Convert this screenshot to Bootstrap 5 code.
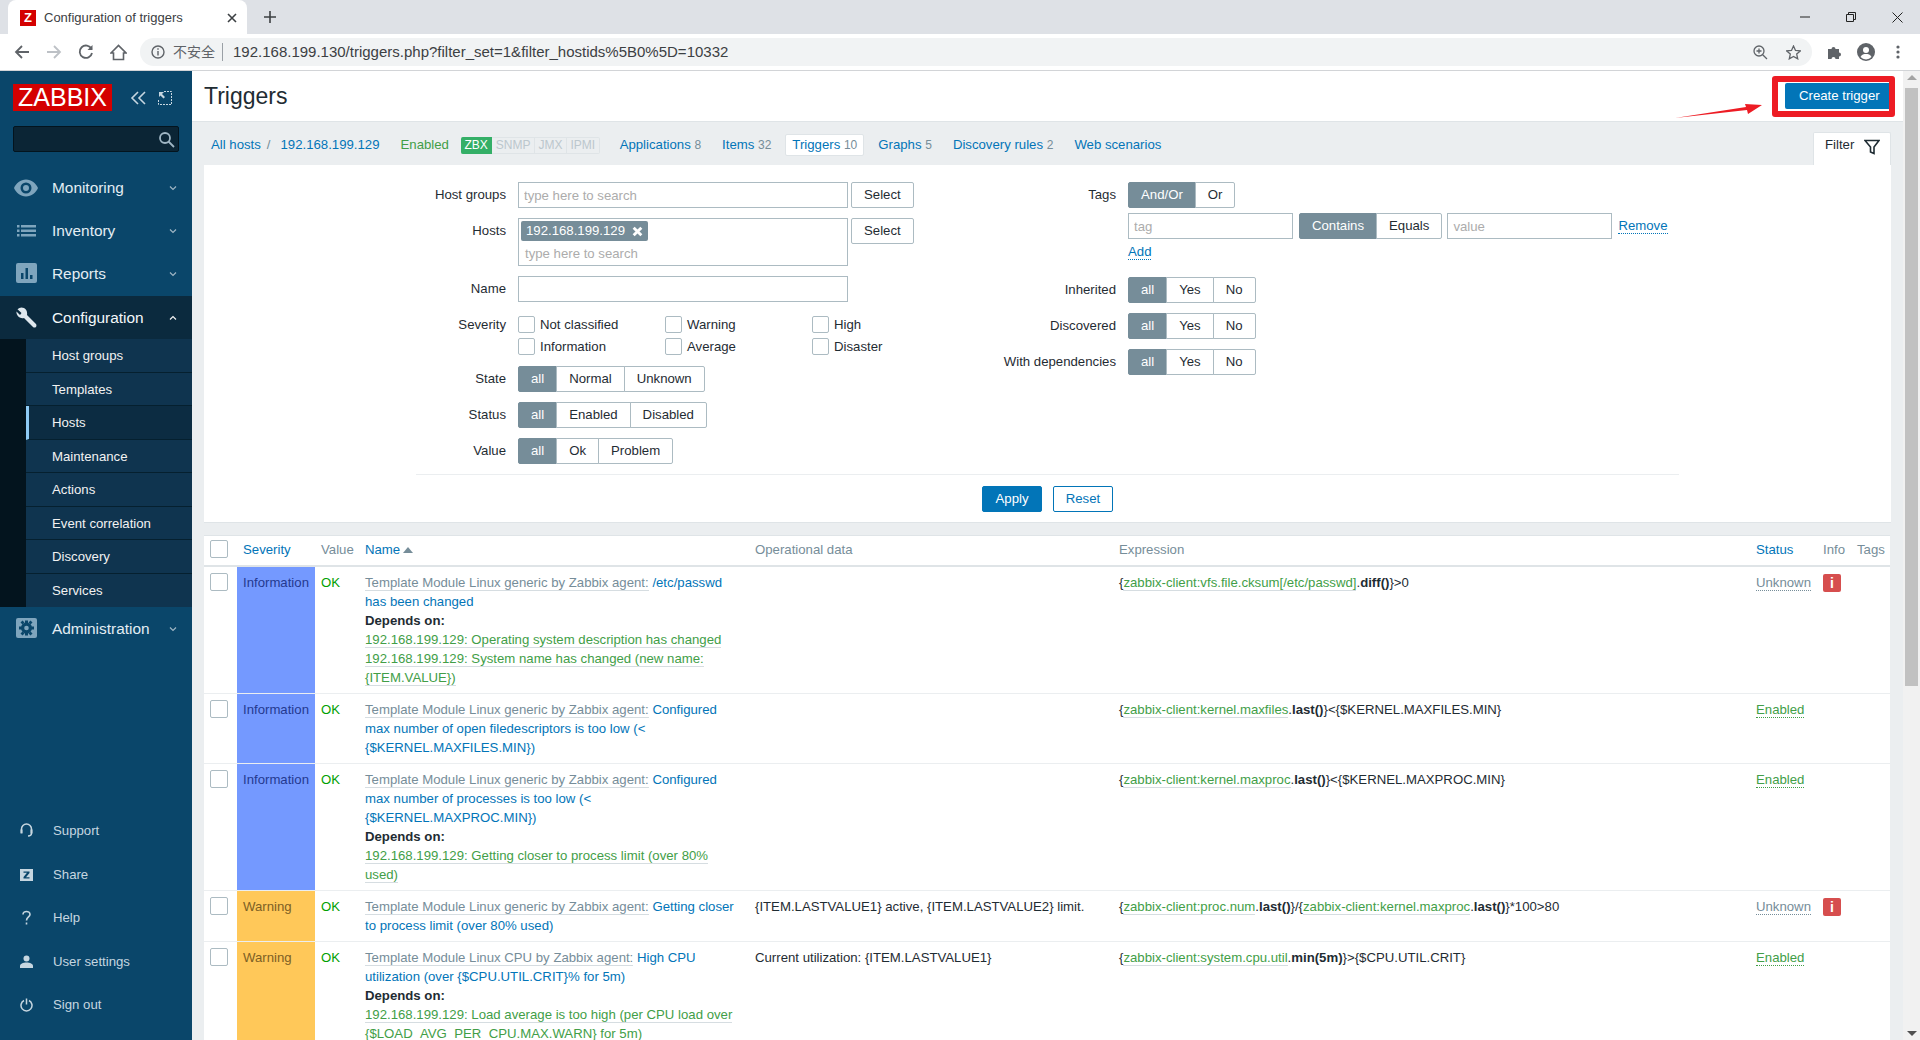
<!DOCTYPE html>
<html lang="en">
<head>
    <meta charset="UTF-8">
    <title>Configuration of triggers</title>
    <link href="https://cdn.jsdelivr.net/npm/bootstrap@5.3.3/dist/css/bootstrap.min.css" rel="stylesheet">
    <style>
        html, body { height: 100%; }
        body { font-family: "Liberation Sans", Arial, sans-serif; font-size: 13.2px; color: #1f2c33; overflow: hidden; background: #ebeef0; }
        a { text-decoration: none; color: #0275b8; }

        /* browser frame */
        .tab-strip { height: 34px; background: #dee1e6; flex: none; }
        .br-tab { width: 239px; margin-left: 8px; height: 34px; background: #fff; border-radius: 8px 8px 0 0; padding: 1px 10px 0 12px; color: #3c4043; font-size: 13px; }
        .br-fav { width: 16px; height: 16px; background: #d40000; color: #fff; font-weight: 700; font-size: 13px; line-height: 16px; text-align: center; }
        .br-plus { margin-left: 17px; }
        .win-btns { margin-left: auto; gap: 36px; padding-right: 17px; }
        .tool-bar { height: 37px; background: #fff; border-bottom: 1px solid #d2d4d7; padding: 0 0 0 14px; flex: none; }
        .omni { height: 28px; width: 1672px; margin-left: 13px; background: #f1f3f4; border-radius: 14px; padding: 0 11px; }
        .omni-warn { font-family: "Liberation Sans", "Noto Sans CJK SC", sans-serif; font-size: 14px; color: #5f6368; margin-left: 8px; padding-right: 7px; border-right: 1px solid #9aa0a6; line-height: 18px; }
        .omni-url { font-size: 15px; color: #3c4043; margin-left: 10px; }
        .star-ico { margin-left: 18px; }
        .puzzle-ico { margin-left: 15px; }
        .avatar-ico { margin-left: 14px; }
        .dots-ico { margin-left: 21px; }

        /* sidebar */
        .side-bar { width: 192px; flex: none; background: #0a466a; color: #f2f2f2; }
        .logo-box { background: #d40000; color: #fff; font-size: 25px; line-height: 27px; width: 99px; text-align: center; margin-right: 18px; }
        .logo-row { padding: 13px 0 0 13px; }
        .expand-ico { margin-left: 12px; }
        .side-search { margin: 15px 13px 15px; height: 26px; background: #0b2535; border: 1px solid #03141e; border-radius: 2px; padding-right: 3px; }
        .menu-main { height: 43px; padding: 0 15px 0 16px; font-size: 15.4px; color: #e3edf3; }
        .menu-main .menu-txt { margin-left: 15px; }
        .menu-lift { padding-bottom: 2px; }
        .menu-ico { width: 21px; height: 21px; flex: none; }
        .eye-ico { width: 24px; height: 24px; margin: 0 -1px 0 -2px; flex: none; }
        .menu-open { background: #0b2a3e; color: #f4f8fa; }
        .menu-caret { margin-left: auto; width: 8px; height: 8px; flex: none; }
        .sub-wrap { border-left: 26px solid #03141e; }
        .sub-item { height: 33.5px; padding-left: 26px; background: #0f344f; color: #f2f2f2; border-bottom: 1px solid #05202f; line-height: 33px; }
        .sub-item:last-child { border-bottom: 0; }
        .sub-active { background: #0c2c42; border-left: 3px solid #8ecbf5; padding-left: 23px; }
        .foot-menu { margin-top: auto; padding-bottom: 13px; }
        .foot-item { height: 43.5px; padding-left: 20px; color: #c6d6e0; }
        .foot-item .menu-txt { margin-left: 20px; }
        .foot-ico { width: 13px; height: 16px; flex: none; }

        /* content */
        .main-col { min-width: 0; }
        .page-head { height: 51px; background: #fff; border-bottom: 1px solid #dfe4e7; padding: 0 0 0 12px; flex: none; }
        .page-title { font-size: 23px; font-weight: 400; margin: 0; padding-top: 2px; color: #1f2c33; }
        .btn-create { height: 26px; width: 105px; margin-right: 13px; padding-left: 14px; background: #0275b8; color: #fff; border-radius: 2px 0 0 2px; font-size: 13.2px; line-height: 26px; }
        .host-nav { height: 43px; padding: 3px 12px 0 19px; flex: none; }
        .crumb-sep { margin: 0 10px 0 6px; color: #768d99; }
        .status-ok { color: #429e47; margin-left: 21px; margin-right: 12px; }
        .avail-box { height: 17px; font-size: 12px; line-height: 15px; margin-right: 6px; }
        .avail-item { border: 1px solid #dfe4e7; border-left: 0; color: #bcc7cd; padding: 0 3.5px; background: #ebeef0; }
        .avail-item:last-child { border-radius: 0 2px 2px 0; }
        .avail-zbx { background: #34af67; border-color: #34af67; color: #fff; border-radius: 2px 0 0 2px; }
        .nav-entry { padding: 3px 7px; margin-left: 7px; line-height: 16px; }
        .nav-entry span { color: #768d99; font-size: 12px; }
        .nav-now { background: #fff; border: 1px solid #dfe4e7; border-radius: 2px; padding: 2px 6px; }
        .filter-tab { margin-left: auto; align-self: flex-end; width: 78px; height: 33px; background: #fff; border: 1px solid #dfe4e7; border-bottom: 0; border-radius: 2px 2px 0 0; padding: 2px 10px 0 11px; }
        .filter-panel { margin: 0 12px; background: #fff; border-bottom: 1px solid #dfe4e7; padding: 17px 0 0 212px; height: 358px; flex: none; }
        .filter-left { width: 588px; }
        .filter-right { width: 675px; }
        .flt-row { display: grid; grid-template-columns: 90px 1fr; column-gap: 12px; margin-bottom: 10px; }
        .filter-right .flt-row { grid-template-columns: 112px 1fr; }
        .flt-lab { text-align: right; line-height: 26px; white-space: nowrap; justify-self: end; }
        .flt-input.form-control { width: 330px; height: 26px; padding: 0 5px; border: 1px solid #acbbc2; border-radius: 0; font-size: 13.2px; color: #1f2c33; }
        .flt-input.flt-small { width: 165px; }
        .flt-input::placeholder, .multi-hint { color: #acacac; }
        .multi-box { width: 330px; height: 48px; border: 1px solid #acbbc2; padding: 2px; }
        .host-chip { width: 127px; height: 20px; background: #768d99; color: #fff; border-radius: 2px; padding: 0 5px 0 5px; line-height: 20px; }
        .multi-hint { padding: 3px 4px 0; }
        .sel-btn.btn { height: 26px; margin-left: 3px; padding: 0 12px; background: #fff; border: 1px solid #acbbc2; border-radius: 2px; color: #1f2c33; font-size: 13.2px; line-height: 24px; }
        .seg-btn.btn { height: 26px; padding: 0 12px; background: #fff; border: 1px solid #acbbc2; color: #1f2c33; font-size: 13.2px; line-height: 24px; border-radius: 2px; }
        .seg-btn.seg-on { background: #768d99; border-color: #768d99; color: #fff; }
        .name-row { margin-bottom: 14px; }
        .tags-row { margin-bottom: 5px; }
        .tag-rule-row { margin-bottom: 15px; }
        .tag-seg { margin: 0 5px 0 6px; }
        .sev-grid { display: grid; grid-template-columns: repeat(3, 147px); row-gap: 5px; margin-bottom: 11px; }
        .sev-row { margin-bottom: 0; }
        .sev-item { line-height: 17px; }
        .trg-check.form-check-input { width: 17px; height: 17px; margin: 0; border: 1px solid #acbbc2; border-radius: 2px; flex: none; }
        .sev-item .trg-check.form-check-input { margin-right: 5px; }
        .dot-link { border-bottom: 1px dotted currentColor; line-height: 15px; }
        .add-link { margin-top: 5px; }
        .remove-link { margin-left: 6px; }
        .flt-div { width: 1263px; height: 1px; background: #ebeef0; }
        .flt-actions { width: 1263px; margin-top: 11px; padding-left: 566px; gap: 11px; }
        .btn-apply.btn, .btn-reset.btn { width: 60px; height: 26px; padding: 0; font-size: 13.2px; border-radius: 2px; line-height: 24px; }
        .btn-apply.btn { background: #0275b8; border: 1px solid #0275b8; color: #fff; }
        .btn-reset.btn { background: #fff; border: 1px solid #0275b8; color: #0275b8; }

        /* triggers table */
        .trg-wrap { margin: 12px 13px 0 12px; border-top: 1px solid #dfe4e7; background: #fff; flex: none; }
        .trg-table.table { table-layout: fixed; margin: 0; width: 1686px; font-size: 13.2px; --bs-table-bg: transparent; color: #1f2c33; }
        .trg-table thead th { font-weight: 400; color: #768d99; padding: 4px 6px 0; height: 30px; border-bottom: 2px solid #dfe4e7; line-height: 19px; vertical-align: top; }
        .trg-table td { padding: 6px; line-height: 19px; border-bottom: 1px solid #ebeef0; vertical-align: top; }
        .trg-table .chk-cell .trg-check.form-check-input { display: block; width: 18px; height: 18px; }
        .trg-table td.sev-info { background: #7499ff; color: #24398f; }
        .trg-table td.sev-warn { background: #ffc859; color: #7d6025; }
        .sort-up { display: inline-block; margin-left: 3px; border: 5px solid transparent; border-top: 0; border-bottom: 6px solid #768d99; vertical-align: 1px; }
        .trg-table td.val-ok { color: #00a000; }
        .tpl-link { color: #768d99; border-bottom: 1px solid #d6dde1; }
        .dep-link { color: #429e47; border-bottom: 1px solid #d6dde1; }
        .st-off { color: #768d99; }
        .st-on { color: #429e47; }
        .info-ico { display: block; width: 18px; height: 18px; background: #d64e4e; border-radius: 2px; color: #fff; font-weight: 700; font-size: 14px; line-height: 18px; text-align: center; margin-top: 1px; }

        /* scrollbar */
        .fake-scroll { width: 17px; flex: none; background: #f1f1f1; padding-top: 17px; }
        .scroll-thumb { height: 598px; width: 13px; margin: 0 auto; background: #c1c1c1; }
        .scroll-up, .scroll-down { position: absolute; left: 4px; border: 5px solid transparent; }
        .scroll-up { top: 4px; border-top: 0; border-bottom: 5px solid #a3a3a3; }
        .scroll-down { bottom: 4px; border-bottom: 0; border-top: 5px solid #505050; }

        /* annotation on top of the screenshot */
        .note-frame { position: absolute; left: 1772px; top: 76px; width: 123px; height: 41px; border: 6px solid #ed1c24; border-radius: 3px; pointer-events: none; }
        .note-arrow { position: absolute; left: 1672px; top: 100px; width: 92px; height: 20px; pointer-events: none; }
    </style>
</head>
<body class="d-flex flex-column position-relative">

<!-- browser tabs -->
<div class="tab-strip d-flex align-items-center">
    <div class="br-tab d-flex align-items-center">
        <span class="br-fav">Z</span>
        <span class="ms-2 flex-grow-1">Configuration of triggers</span>
        <svg width="10" height="10" viewBox="0 0 10 10"><path d="M1 1l8 8M9 1l-8 8" stroke="#3c4043" stroke-width="1.6"/></svg>
    </div>
    <svg class="br-plus" width="12" height="12" viewBox="0 0 12 12"><path d="M6 0v12M0 6h12" stroke="#3c4043" stroke-width="1.6"/></svg>
    <div class="win-btns d-flex align-items-center">
        <svg width="10" height="10" viewBox="0 0 10 10"><path d="M0 5h10" stroke="#222" stroke-width="1"/></svg>
        <svg width="10" height="10" viewBox="0 0 10 10" fill="none" stroke="#222"><path d="M.5 2.500h7v7h-7zM2.500 2.500v-2h7v7h-2"/></svg>
        <svg width="11" height="11" viewBox="0 0 11 11"><path d="M.5.5l10 10M10.500.5l-10 10" stroke="#222"/></svg>
    </div>
</div>

<!-- browser toolbar -->
<div class="tool-bar d-flex align-items-center">
    <svg width="16" height="16" viewBox="0 0 16 16" fill="none" stroke="#5f6368" stroke-width="1.8"><path d="M15 8H2M8 2L2 8l6 6"/></svg>
    <svg class="ms-3" width="16" height="16" viewBox="0 0 16 16" fill="none" stroke="#bdc1c6" stroke-width="1.8"><path d="M1 8h13M8 2l6 6-6 6"/></svg>
    <svg class="ms-3" width="16" height="16" viewBox="0 0 16 16" fill="none" stroke="#5f6368" stroke-width="1.8"><path d="M13.500 5A6.200 6.200 0 1 0 14 9"/><path d="M14.500 1v5h-5" fill="#5f6368" stroke="none"/></svg>
    <svg class="ms-3" width="17" height="17" viewBox="0 0 17 17" fill="none" stroke="#5f6368" stroke-width="1.6"><path d="M1 9l7.500-7.500L16 9h-2.500v6.500h-10V9z"/></svg>
    <div class="omni d-flex align-items-center">
        <svg width="14" height="14" viewBox="0 0 14 14" fill="none" stroke="#5f6368" stroke-width="1.4"><circle cx="7" cy="7" r="6"/><path d="M7 6v4.500M7 3.300v1.500"/></svg>
        <span class="omni-warn">不安全</span>
        <span class="omni-url">192.168.199.130/triggers.php?filter_set=1&amp;filter_hostids%5B0%5D=10332</span>
        <svg class="ms-auto" width="15" height="15" viewBox="0 0 15 15" fill="none" stroke="#5f6368" stroke-width="1.3"><circle cx="6" cy="6" r="5"/><path d="M9.700 9.700L14 14M3.500 6h5M6 3.500v5"/></svg>
        <svg class="star-ico" width="15" height="15" viewBox="0 0 15 15" fill="none" stroke="#5f6368" stroke-width="1.3"><path d="M7.500 1l2 4.400 4.800.5-3.600 3.200 1 4.700-4.200-2.400-4.200 2.400 1-4.700L.7 5.900l4.800-.5z"/></svg>
    </div>
    <svg class="puzzle-ico" width="16" height="16" viewBox="0 0 16 16" fill="#5f6368"><path d="M1 5h3.500a2 2 0 1 1 4 0H12v3.500a2 2 0 1 1 0 4V15H8.500a2 2 0 1 0-4 0H1z"/></svg>
    <svg class="avatar-ico" width="18" height="18" viewBox="0 0 18 18"><circle cx="9" cy="9" r="9" fill="#5f6368"/><circle cx="9" cy="7" r="3" fill="#fff"/><path d="M3.500 14c1-2.500 3.500-3 5.500-3s4.500.5 5.500 3a7.500 7.500 0 0 1-11 0z" fill="#fff"/></svg>
    <svg class="dots-ico" width="4" height="14" viewBox="0 0 4 14" fill="#5f6368"><circle cx="2" cy="2" r="1.600"/><circle cx="2" cy="7" r="1.600"/><circle cx="2" cy="12" r="1.600"/></svg>
</div>

<div class="d-flex flex-grow-1 overflow-hidden">

    <!-- zabbix sidebar -->
    <aside class="side-bar d-flex flex-column">
        <div class="logo-row d-flex align-items-center">
            <div class="logo-box">ZABBIX</div>
            <svg width="16" height="14" viewBox="0 0 16 14" fill="none" stroke="#c6d6e0" stroke-width="1.6"><path d="M8 1L2 7l6 6M15 1L9 7l6 6"/></svg>
            <svg class="expand-ico" width="14" height="14" viewBox="0 0 14 14" fill="none" stroke="#c6d6e0"><path d="M6 .5h7.500v13H.5V8" stroke-dasharray="2 1"/><path d="M1 1h5l-2 2 3 3-1.500 1.500-3-3L1 6z" fill="#c6d6e0" stroke="none"/></svg>
        </div>
        <div class="side-search d-flex align-items-center justify-content-end">
            <svg width="17" height="17" viewBox="0 0 17 17" fill="none" stroke="#9fb6c4" stroke-width="1.8"><circle cx="7" cy="7" r="5"/><path d="M10.500 10.500L16 16"/></svg>
        </div>

        <div class="menu-main menu-lift d-flex align-items-center">
            <svg class="eye-ico" viewBox="0 0 24 24" fill="#7fa5bd"><path d="M12 3.500C6.500 3.500 2 7.500 0 12c2 4.500 6.500 8.500 12 8.500S22 16.500 24 12c-2-4.500-6.500-8.500-12-8.500zm0 14a5.500 5.500 0 1 1 0-11 5.500 5.500 0 0 1 0 11zm0-8.500a3 3 0 1 0 0 6 3 3 0 0 0 0-6z"/></svg>
            <span class="menu-txt">Monitoring</span>
            <svg class="menu-caret" viewBox="0 0 8 8" fill="none" stroke="#9fb6c4" stroke-width="1.200"><path d="M1 2.500l3 3 3-3"/></svg>
        </div>
        <div class="menu-main menu-lift d-flex align-items-center">
            <svg class="menu-ico" viewBox="0 0 21 21" fill="#7fa5bd"><path d="M1 5h2.500v2.500H1zM5 5h15v2.500H5zM1 9.500h2.500V12H1zM5 9.500h15V12H5zM1 14h2.500v2.500H1zM5 14h15v2.500H5z"/></svg>
            <span class="menu-txt">Inventory</span>
            <svg class="menu-caret" viewBox="0 0 8 8" fill="none" stroke="#9fb6c4" stroke-width="1.200"><path d="M1 2.500l3 3 3-3"/></svg>
        </div>
        <div class="menu-main menu-lift d-flex align-items-center">
            <svg class="menu-ico" viewBox="0 0 21 21"><rect width="21" height="20" rx="2" fill="#7fa5bd"/><path d="M5 10h2.500v6H5zM9.500 5H12v11H9.500zM14 12h2.500v4H14z" fill="#0a466a"/></svg>
            <span class="menu-txt">Reports</span>
            <svg class="menu-caret" viewBox="0 0 8 8" fill="none" stroke="#9fb6c4" stroke-width="1.200"><path d="M1 2.500l3 3 3-3"/></svg>
        </div>
        <div class="menu-main menu-open d-flex align-items-center">
            <svg class="menu-ico" viewBox="0 0 21 21" fill="#dfe8ee"><path d="M8 1a6 6 0 0 0-6.500 1.200L5.500 6 4 8 .5 4.500A6 6 0 0 0 8 11l9 9c1 .8 2 .6 3 0 .6-1 .6-2 0-3l-9-9c.5-3-.5-5.500-3-7z"/></svg>
            <span class="menu-txt">Configuration</span>
            <svg class="menu-caret" viewBox="0 0 8 8" fill="none" stroke="#f2f2f2" stroke-width="1.200"><path d="M1 5.500l3-3 3 3"/></svg>
        </div>
        <div class="sub-wrap">
            <div class="sub-item">Host groups</div>
            <div class="sub-item">Templates</div>
            <div class="sub-item sub-active">Hosts</div>
            <div class="sub-item">Maintenance</div>
            <div class="sub-item">Actions</div>
            <div class="sub-item">Event correlation</div>
            <div class="sub-item">Discovery</div>
            <div class="sub-item">Services</div>
        </div>
        <div class="menu-main d-flex align-items-center">
            <svg class="menu-ico" viewBox="0 0 21 21"><rect width="21" height="20" rx="2" fill="#7fa5bd"/><circle cx="10.500" cy="10" r="5.500" fill="#0a466a"/><path d="M9 2.500h3v3H9zM9 14.500h3v3H9zM3 8.500h3v3H3zM15 8.500h3v3h-3zM4.500 4.500l2-2 2 2-2 2zM12.500 4.500l2-2 2 2-2 2zM4.500 15.500l2-2 2 2-2 2zM12.500 15.500l2-2 2 2-2 2z" fill="#0a466a"/><circle cx="10.500" cy="10" r="2.300" fill="#7fa5bd"/></svg>
            <span class="menu-txt">Administration</span>
            <svg class="menu-caret" viewBox="0 0 8 8" fill="none" stroke="#9fb6c4" stroke-width="1.200"><path d="M1 2.500l3 3 3-3"/></svg>
        </div>

        <div class="foot-menu">
            <div class="foot-item d-flex align-items-center">
                <svg class="foot-ico" viewBox="0 0 13 16" fill="none" stroke="#c6d6e0" stroke-width="1.500"><path d="M1.500 10V6a5 5 0 0 1 10 0v4M11.500 10c0 2-1 3-3.500 3"/><rect x=".5" y="6.500" width="2" height="4" fill="#c6d6e0" stroke="none"/><rect x="10.500" y="6.500" width="2" height="4" fill="#c6d6e0" stroke="none"/></svg>
                <span class="menu-txt">Support</span>
            </div>
            <div class="foot-item d-flex align-items-center">
                <svg class="foot-ico" viewBox="0 0 13 16"><rect y="2" width="13" height="12" fill="#c6d6e0"/><path d="M3.500 4.500h6v1.500L6 10.200h3.500v1.300h-6V10L7 5.800H3.500z" fill="#0a466a"/></svg>
                <span class="menu-txt">Share</span>
            </div>
            <div class="foot-item d-flex align-items-center">
                <svg class="foot-ico" viewBox="0 0 13 16" fill="none" stroke="#c6d6e0" stroke-width="1.600"><path d="M3 4.500C3 2.500 5 1.500 6.500 1.500S10 2.500 10 4.500c0 2.500-3.500 2.500-3.500 6"/><path d="M6.500 12.500v2"/></svg>
                <span class="menu-txt">Help</span>
            </div>
            <div class="foot-item d-flex align-items-center">
                <svg class="foot-ico" viewBox="0 0 13 16" fill="#c6d6e0"><circle cx="6.500" cy="4.500" r="3"/><path d="M0 14v-2c0-2 3-3.500 6.500-3.500S13 10 13 12v2z"/></svg>
                <span class="menu-txt">User settings</span>
            </div>
            <div class="foot-item d-flex align-items-center">
                <svg class="foot-ico" viewBox="0 0 13 16" fill="none" stroke="#c6d6e0" stroke-width="1.500"><path d="M4 3.500a5.500 5.500 0 1 0 5 0M6.500 1.500v6"/></svg>
                <span class="menu-txt">Sign out</span>
            </div>
        </div>
    </aside>

    <main class="main-col flex-grow-1 d-flex flex-column overflow-hidden">
        <header class="page-head d-flex align-items-center justify-content-between">
            <h1 class="page-title">Triggers</h1>
            <a class="btn-create" href="#">Create trigger</a>
        </header>

        <nav class="host-nav d-flex align-items-center">
            <a href="#">All hosts</a><span class="crumb-sep">/</span><a href="#">192.168.199.129</a>
            <span class="status-ok">Enabled</span>
            <div class="avail-box d-flex">
                <span class="avail-item avail-zbx">ZBX</span>
                <span class="avail-item">SNMP</span>
                <span class="avail-item">JMX</span>
                <span class="avail-item">IPMI</span>
            </div>
            <a class="nav-entry" href="#">Applications <span>8</span></a>
            <a class="nav-entry" href="#">Items <span>32</span></a>
            <a class="nav-entry nav-now" href="#">Triggers <span>10</span></a>
            <a class="nav-entry" href="#">Graphs <span>5</span></a>
            <a class="nav-entry" href="#">Discovery rules <span>2</span></a>
            <a class="nav-entry" href="#">Web scenarios</a>
            <div class="filter-tab d-flex align-items-start justify-content-between">
                <span>Filter</span>
                <svg class="mt-1" width="16" height="16" viewBox="0 0 16 16" fill="none" stroke="#1f2c33" stroke-width="1.600"><path d="M1 1.500h14L10 8v6.500l-3.500-1.500V8z"/></svg>
            </div>
        </nav>

        <section class="filter-panel">
            <div class="d-flex">
                <div class="filter-left">
                    <div class="flt-row">
                        <label class="flt-lab">Host groups</label>
                        <div class="d-flex"><input class="form-control flt-input" placeholder="type here to search"><button class="btn sel-btn" type="button">Select</button></div>
                    </div>
                    <div class="flt-row">
                        <label class="flt-lab">Hosts</label>
                        <div class="d-flex align-items-start">
                            <div class="multi-box">
                                <div class="host-chip d-flex align-items-center justify-content-between">192.168.199.129
                                    <svg width="11" height="11" viewBox="0 0 10 10"><path d="M1.500 1.500l7 7M8.500 1.500l-7 7" stroke="#fff" stroke-width="2.600"/></svg>
                                </div>
                                <div class="multi-hint">type here to search</div>
                            </div>
                            <button class="btn sel-btn" type="button">Select</button>
                        </div>
                    </div>
                    <div class="flt-row name-row">
                        <label class="flt-lab">Name</label>
                        <div><input class="form-control flt-input"></div>
                    </div>
                    <div class="flt-row sev-row">
                        <label class="flt-lab sev-item">Severity</label>
                        <div class="sev-grid">
                            <div class="sev-item d-flex"><input class="form-check-input trg-check" type="checkbox">Not classified</div>
                            <div class="sev-item d-flex"><input class="form-check-input trg-check" type="checkbox">Warning</div>
                            <div class="sev-item d-flex"><input class="form-check-input trg-check" type="checkbox">High</div>
                            <div class="sev-item d-flex"><input class="form-check-input trg-check" type="checkbox">Information</div>
                            <div class="sev-item d-flex"><input class="form-check-input trg-check" type="checkbox">Average</div>
                            <div class="sev-item d-flex"><input class="form-check-input trg-check" type="checkbox">Disaster</div>
                        </div>
                    </div>
                    <div class="flt-row">
                        <label class="flt-lab">State</label>
                        <div><div class="btn-group"><button class="btn seg-btn seg-on">all</button><button class="btn seg-btn">Normal</button><button class="btn seg-btn">Unknown</button></div></div>
                    </div>
                    <div class="flt-row">
                        <label class="flt-lab">Status</label>
                        <div><div class="btn-group"><button class="btn seg-btn seg-on">all</button><button class="btn seg-btn">Enabled</button><button class="btn seg-btn">Disabled</button></div></div>
                    </div>
                    <div class="flt-row">
                        <label class="flt-lab">Value</label>
                        <div><div class="btn-group"><button class="btn seg-btn seg-on">all</button><button class="btn seg-btn">Ok</button><button class="btn seg-btn">Problem</button></div></div>
                    </div>
                </div>

                <div class="filter-right">
                    <div class="flt-row tags-row">
                        <label class="flt-lab">Tags</label>
                        <div><div class="btn-group"><button class="btn seg-btn seg-on">And/Or</button><button class="btn seg-btn">Or</button></div></div>
                    </div>
                    <div class="flt-row tag-rule-row">
                        <span></span>
                        <div>
                            <div class="d-flex align-items-center">
                                <input class="form-control flt-input flt-small" placeholder="tag">
                                <div class="btn-group tag-seg"><button class="btn seg-btn seg-on">Contains</button><button class="btn seg-btn">Equals</button></div>
                                <input class="form-control flt-input flt-small" placeholder="value">
                                <a class="dot-link remove-link" href="#">Remove</a>
                            </div>
                            <a class="dot-link d-inline-block add-link" href="#">Add</a>
                        </div>
                    </div>
                    <div class="flt-row">
                        <label class="flt-lab">Inherited</label>
                        <div><div class="btn-group"><button class="btn seg-btn seg-on">all</button><button class="btn seg-btn">Yes</button><button class="btn seg-btn">No</button></div></div>
                    </div>
                    <div class="flt-row">
                        <label class="flt-lab">Discovered</label>
                        <div><div class="btn-group"><button class="btn seg-btn seg-on">all</button><button class="btn seg-btn">Yes</button><button class="btn seg-btn">No</button></div></div>
                    </div>
                    <div class="flt-row">
                        <label class="flt-lab">With dependencies</label>
                        <div><div class="btn-group"><button class="btn seg-btn seg-on">all</button><button class="btn seg-btn">Yes</button><button class="btn seg-btn">No</button></div></div>
                    </div>
                </div>
            </div>
            <div class="flt-div"></div>
            <div class="flt-actions d-flex">
                <button class="btn btn-apply" type="button">Apply</button>
                <button class="btn btn-reset" type="button">Reset</button>
            </div>
        </section>

        <div class="trg-wrap">
            <table class="table trg-table">
                <colgroup>
                    <col style="width:33px"><col style="width:78px"><col style="width:44px"><col style="width:390px"><col style="width:364px"><col style="width:637px"><col style="width:67px"><col style="width:34px"><col style="width:39px">
                </colgroup>
                <thead>
                    <tr>
                        <th class="chk-cell"><input class="form-check-input trg-check" type="checkbox"></th>
                        <th><a href="#">Severity</a></th>
                        <th>Value</th>
                        <th><a href="#">Name</a><span class="sort-up"></span></th>
                        <th>Operational data</th>
                        <th>Expression</th>
                        <th><a href="#">Status</a></th>
                        <th>Info</th>
                        <th>Tags</th>
                    </tr>
                </thead>
                <tbody>
                    <tr>
                        <td class="chk-cell"><input class="form-check-input trg-check" type="checkbox"></td>
                        <td class="sev-info">Information</td>
                        <td class="val-ok">OK</td>
                        <td><span class="tpl-link">Template Module Linux generic by Zabbix agent:</span> <a href="#">/etc/passwd has been changed</a><br>
                            <b>Depends on:</b><br>
                            <span class="dep-link">192.168.199.129: Operating system description has changed</span><br>
                            <span class="dep-link">192.168.199.129: System name has changed (new name: {ITEM.VALUE})</span></td>
                        <td></td>
                        <td>{<span class="dep-link">zabbix-client:vfs.file.cksum[/etc/passwd]</span>.<b>diff()</b>}&gt;0</td>
                        <td><a class="dot-link st-off" href="#">Unknown</a></td>
                        <td><span class="info-ico">i</span></td>
                        <td></td>
                    </tr>
                    <tr>
                        <td class="chk-cell"><input class="form-check-input trg-check" type="checkbox"></td>
                        <td class="sev-info">Information</td>
                        <td class="val-ok">OK</td>
                        <td><span class="tpl-link">Template Module Linux generic by Zabbix agent:</span> <a href="#">Configured max number of open filedescriptors is too low (&lt; {$KERNEL.MAXFILES.MIN})</a></td>
                        <td></td>
                        <td>{<span class="dep-link">zabbix-client:kernel.maxfiles</span>.<b>last()</b>}&lt;{$KERNEL.MAXFILES.MIN}</td>
                        <td><a class="dot-link st-on" href="#">Enabled</a></td>
                        <td></td>
                        <td></td>
                    </tr>
                    <tr>
                        <td class="chk-cell"><input class="form-check-input trg-check" type="checkbox"></td>
                        <td class="sev-info">Information</td>
                        <td class="val-ok">OK</td>
                        <td><span class="tpl-link">Template Module Linux generic by Zabbix agent:</span> <a href="#">Configured max number of processes is too low (&lt; {$KERNEL.MAXPROC.MIN})</a><br>
                            <b>Depends on:</b><br>
                            <span class="dep-link">192.168.199.129: Getting closer to process limit (over 80% used)</span></td>
                        <td></td>
                        <td>{<span class="dep-link">zabbix-client:kernel.maxproc</span>.<b>last()</b>}&lt;{$KERNEL.MAXPROC.MIN}</td>
                        <td><a class="dot-link st-on" href="#">Enabled</a></td>
                        <td></td>
                        <td></td>
                    </tr>
                    <tr>
                        <td class="chk-cell"><input class="form-check-input trg-check" type="checkbox"></td>
                        <td class="sev-warn">Warning</td>
                        <td class="val-ok">OK</td>
                        <td><span class="tpl-link">Template Module Linux generic by Zabbix agent:</span> <a href="#">Getting closer to process limit (over 80% used)</a></td>
                        <td>{ITEM.LASTVALUE1} active, {ITEM.LASTVALUE2} limit.</td>
                        <td>{<span class="dep-link">zabbix-client:proc.num</span>.<b>last()</b>}/{<span class="dep-link">zabbix-client:kernel.maxproc</span>.<b>last()</b>}*100&gt;80</td>
                        <td><a class="dot-link st-off" href="#">Unknown</a></td>
                        <td><span class="info-ico">i</span></td>
                        <td></td>
                    </tr>
                    <tr>
                        <td class="chk-cell"><input class="form-check-input trg-check" type="checkbox"></td>
                        <td class="sev-warn">Warning</td>
                        <td class="val-ok">OK</td>
                        <td><span class="tpl-link">Template Module Linux CPU by Zabbix agent:</span> <a href="#">High CPU utilization (over {$CPU.UTIL.CRIT}% for 5m)</a><br>
                            <b>Depends on:</b><br>
                            <span class="dep-link">192.168.199.129: Load average is too high (per CPU load over {$LOAD_AVG_PER_CPU.MAX.WARN} for 5m)</span></td>
                        <td>Current utilization: {ITEM.LASTVALUE1}</td>
                        <td>{<span class="dep-link">zabbix-client:system.cpu.util</span>.<b>min(5m)</b>}&gt;{$CPU.UTIL.CRIT}</td>
                        <td><a class="dot-link st-on" href="#">Enabled</a></td>
                        <td></td>
                        <td></td>
                    </tr>
                </tbody>
            </table>
        </div>
    </main>

    <div class="fake-scroll position-relative">
        <span class="scroll-up"></span>
        <div class="scroll-thumb"></div>
        <span class="scroll-down"></span>
    </div>
</div>

<!-- red marks drawn over the screenshot -->
<div class="note-frame"></div>
<svg class="note-arrow" viewBox="0 0 92 20"><path d="M3 18L74 7l-1-3 17 1-14 9-1-4z" fill="#ed1c24"/></svg>

<script src="https://cdn.jsdelivr.net/npm/bootstrap@5.3.3/dist/js/bootstrap.bundle.min.js"></script>
</body>
</html>
